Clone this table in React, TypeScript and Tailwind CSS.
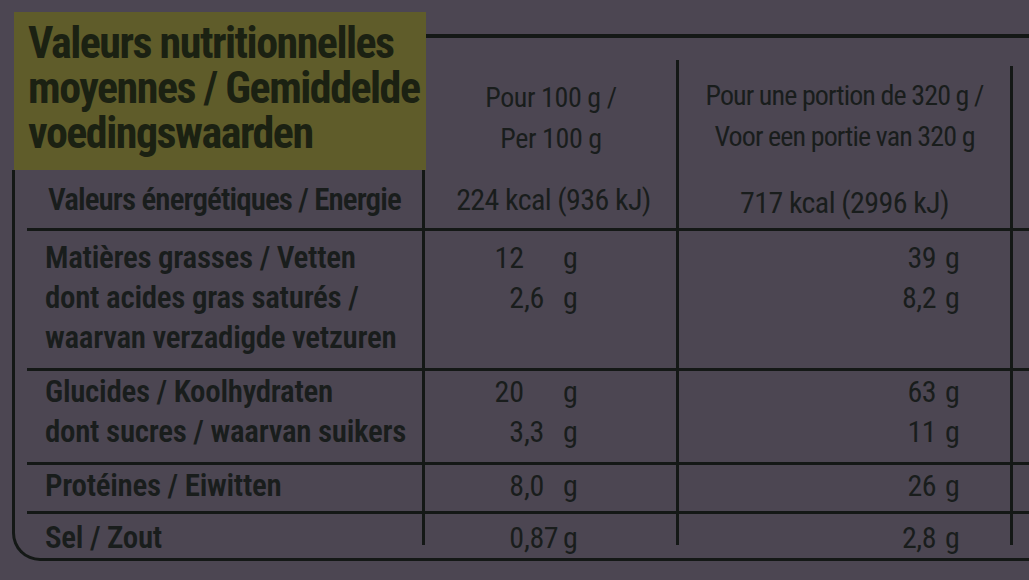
import React from "react";

// Tableau nutritionnel (photo d'emballage)
const face =
  "font-['Liberation_Sans_Narrow','Roboto_Condensed','DejaVu_Sans_Condensed','DejaVu_Sans',sans-serif] font-stretch-condensed";

type Val = { int: string; frac?: string };

type Row = {
  lines: string[];
  pad: string;
  last?: boolean;
  energy?: [string, string];
  v2?: Val[];
  v3?: string[];
};

const rows: Row[] = [
  {
    lines: ["Valeurs énergétiques / Energie"],
    pad: "pt-[10px] pb-[5px]",
    energy: ["224 kcal (936 kJ)", "717 kcal (2996 kJ)"],
  },
  {
    lines: [
      "Matières grasses / Vetten",
      "dont acides gras saturés /",
      "waarvan verzadigde vetzuren",
    ],
    pad: "pt-[7px] pb-[10px]",
    v2: [{ int: "12" }, { int: "2", frac: ",6" }],
    v3: ["39", "8,2"],
  },
  {
    lines: ["Glucides / Koolhydraten", "dont sucres / waarvan suikers"],
    pad: "pt-[1px] pb-[10px]",
    v2: [{ int: "20" }, { int: "3", frac: ",3" }],
    v3: ["63", "11"],
  },
  {
    lines: ["Protéines / Eiwitten"],
    pad: "pt-[1px] pb-[5px]",
    v2: [{ int: "8", frac: ",0" }],
    v3: ["26"],
  },
  {
    lines: ["Sel / Zout"],
    pad: "pt-[4px] h-[31px]",
    last: true,
    v2: [{ int: "0", frac: ",87" }],
    v3: ["2,8"],
  },
];

function TableRow({ row }: { row: Row }) {
  return (
    <div
      className={
        "ml-[12px] flex " + (row.last ? "" : "border-b-[3px] border-[#141816]")
      }
    >
      <div
        className={
          "w-[395px] text-[31px] leading-[40px] font-semibold " +
          (row.energy ? "pl-[21px] tracking-[-0.9px] " : "pl-[18px] tracking-[-0.3px] ") +
          row.pad
        }
      >
        {row.lines.map((l) => (
          <div key={l} className="whitespace-nowrap">
            {l}
          </div>
        ))}
      </div>

      <div
        className={
          "w-[254px] border-l-[3px] border-[#141816] text-[30px] leading-[40px] " +
          row.pad
        }
      >
        {row.energy ? (
          <div className="pl-[6px] text-center whitespace-nowrap tracking-[-0.6px]">
            {row.energy[0]}
          </div>
        ) : (
          row.v2?.map((v, i) => (
            <div key={i} className="flex">
              <span className="w-[99px] text-right">{v.int}</span>
              <span className="w-[39px] tracking-[-0.5px]">{v.frac}</span>
              <span>g</span>
            </div>
          ))
        )}
      </div>

      <div
        className={
          "w-[334px] border-l-[3px] border-[#141816] text-[30px] leading-[40px] " +
          row.pad
        }
      >
        {row.energy ? (
          <div className="pt-[3px] text-center whitespace-nowrap tracking-[-0.6px]">
            {row.energy[1]}
          </div>
        ) : (
          row.v3?.map((v, i) => (
            <div key={i} className="flex">
              <span className="w-[257px] text-right tracking-[-0.5px]">{v}</span>
              <span className="pl-[9px]">g</span>
            </div>
          ))
        )}
      </div>

      <div className={"flex-1 border-l-[3px] border-[#141816] " + row.pad} />
    </div>
  );
}

export default function App() {
  return (
    <div className={"h-[580px] w-[1029px] overflow-hidden bg-[#4c4652] text-[#191d1c] " + face}>
      {/* en-tête */}
      <div className="flex h-[170px] pl-[14px]">
        <div className="mt-[12px] w-[412px] bg-[#5f5c2a] pl-[14px] pt-[9px] text-[44px] leading-[45px] font-bold tracking-[-1.5px] text-[#1b2112]">
          <div className="whitespace-nowrap">Valeurs nutritionnelles</div>
          <div className="whitespace-nowrap">moyennes / Gemiddelde</div>
          <div className="whitespace-nowrap">voedingswaarden</div>
        </div>
        <div className="flex flex-1 flex-col">
          <div className="mt-[34px] border-t-[4px] border-[#141816]" />
          <div className="flex flex-1 text-[28px] leading-[41px]">
            <div className="w-[250px] pt-[39px] text-center tracking-[-0.4px]">
              <div>Pour 100 g /</div>
              <div>Per 100 g</div>
            </div>
            <div className="mt-[22px] w-[334px] border-l-[3px] border-[#141816] pt-[15px] text-center tracking-[-0.9px]">
              <div className="whitespace-nowrap">Pour une portion de 320 g /</div>
              <div className="whitespace-nowrap">Voor een portie van 320 g</div>
            </div>
            <div className="mt-[28px] flex-1 border-l-[3px] border-[#141816]" />
          </div>
        </div>
      </div>

      {/* corps */}
      <div className="ml-[12px] rounded-bl-[28px] border-b-[3px] border-l-[3px] border-[#141816] pb-[13px]">
        {rows.map((r, i) => (
          <TableRow key={i} row={r} />
        ))}
      </div>
    </div>
  );
}
